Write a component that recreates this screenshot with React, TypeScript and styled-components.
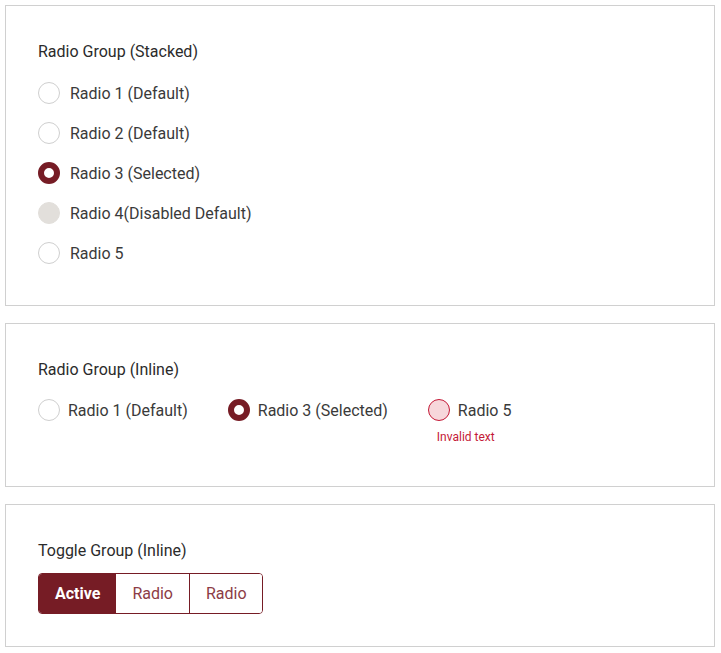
import React, { FC } from "react";
import styled, { createGlobalStyle, css } from "styled-components";

const maroon = "#761c25";

const Global = createGlobalStyle`
    body {
        margin: 0;
        padding: 5px 6px 5px 5px;
        font-family: Roboto, "Liberation Sans", Arial, sans-serif;
        color: #333;
        background: #fff;
    }
`;

const Page = styled.div`
    display: flex;
    flex-direction: column;
    gap: 17px;
`;

const Card = styled.section`
    border: 1px solid #d0d0d0;
    padding: 34px 32px 32px;
`;

const Title = styled.div<{ $mb: number }>`
    font-size: 16px;
    line-height: 24px;
    color: #2b2b2b;
    margin-bottom: ${(p) => p.$mb}px;
`;

type RadioState = "default" | "selected" | "disabled" | "invalid";

const Circle = styled.span<{ $state: RadioState }>`
    box-sizing: border-box;
    width: 22px;
    height: 22px;
    border-radius: 50%;
    flex: none;
    border: 1px solid #cfcfcf;
    background: #fff;
    ${(p) =>
        p.$state === "selected" &&
        css`
            border: 6px solid ${maroon};
        `}
    ${(p) =>
        p.$state === "disabled" &&
        css`
            border-color: #e2dfdb;
            background: #e2dfdb;
        `}
    ${(p) =>
        p.$state === "invalid" &&
        css`
            border-color: #c41a37;
            background: #f7d7db;
        `}
`;

const Row = styled.label<{ $gap: number }>`
    display: flex;
    align-items: center;
    gap: ${(p) => p.$gap}px;
    height: 40px;
    font-size: 16px;
    color: #3a3a3a;
`;

const Stack = styled.div`
    display: flex;
    flex-direction: column;
`;

const Inline = styled.div`
    display: flex;
    align-items: flex-start;
    gap: 40px;
    margin-bottom: 9px;
`;

const Item = styled.div`
    display: flex;
    flex-direction: column;
`;

const Error = styled.div`
    font-size: 12px;
    line-height: 16px;
    color: #c41a37;
    margin: -1px 0 0 9px;
`;

const Radio: FC<{ label: string; state?: RadioState; gap?: number }> = ({ label, state = "default", gap = 10 }) => (
    <Row $gap={gap}>
        <Circle $state={state} />
        <span>{label}</span>
    </Row>
);

const Toggle = styled.div`
    display: inline-flex;
    border: 1px solid ${maroon};
    border-radius: 4px;
    overflow: hidden;
    height: 41px;
    box-sizing: border-box;
`;

const ToggleBtn = styled.button<{ $active?: boolean }>`
    font-family: inherit;
    font-size: 16px;
    border: none;
    border-left: 1px solid ${maroon};
    background: ${(p) => (p.$active ? maroon : "#fff")};
    color: ${(p) => (p.$active ? "#fff" : "#8c3c46")};
    font-weight: ${(p) => (p.$active ? 700 : 400)};
    padding: 0 16px;
    &:first-child {
        border-left: none;
        padding: 0 15px 0 16px;
    }
    &:last-child {
        padding: 0 15px 0 16px;
    }
`;

const App: FC = () => (
    <>
        <Global />
        <Page>
            <Card>
                <Title $mb={9}>Radio Group (Stacked)</Title>
                <Stack>
                    <Radio label="Radio 1 (Default)" />
                    <Radio label="Radio 2 (Default)" />
                    <Radio label="Radio 3 (Selected)" state="selected" />
                    <Radio label="Radio 4(Disabled Default)" state="disabled" />
                    <Radio label="Radio 5" />
                </Stack>
            </Card>
            <Card>
                <Title $mb={8}>Radio Group (Inline)</Title>
                <Inline>
                    <Radio label="Radio 1 (Default)" gap={8} />
                    <Radio label="Radio 3 (Selected)" state="selected" gap={8} />
                    <Item>
                        <Radio label="Radio 5" state="invalid" gap={8} />
                        <Error>Invalid text</Error>
                    </Item>
                </Inline>
            </Card>
            <Card>
                <Title $mb={10}>Toggle Group (Inline)</Title>
                <Toggle>
                    <ToggleBtn $active>Active</ToggleBtn>
                    <ToggleBtn>Radio</ToggleBtn>
                    <ToggleBtn>Radio</ToggleBtn>
                </Toggle>
            </Card>
        </Page>
    </>
);

export default App;
